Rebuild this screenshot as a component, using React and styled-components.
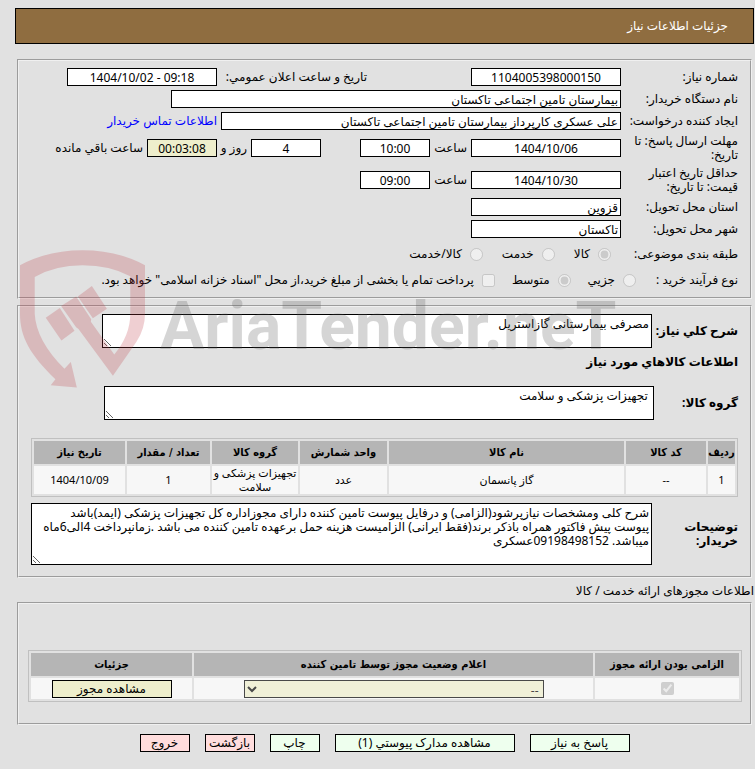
import styled, { createGlobalStyle } from 'styled-components';

const GlobalStyle = createGlobalStyle`
body {
  margin: 8px 1px 8px 15px;
  background-color: #e1e1e1;
  color: #000;
  font-family: 'Noto Sans', 'DejaVu Sans', sans-serif;
  font-size: 12px;
  line-height: 14px;
}

input,
select,
textarea,
button {
  font: inherit;
  color: inherit;
}
`;

const items = [
  {
    id: 1,
    code: '--',
    name: 'گاز پانسمان',
    unit: 'عدد',
    group: 'تجهیزات پزشکی و سلامت',
    amount: '1',
    date: '1404/10/09',
  },
];

const description = 'شرح کلی ومشخصات نیازپرشود(الزامی) و درفایل پیوست تامین کننده دارای مجوزاداره کل تجهیزات پزشکی (ایمد)باشد\nپیوست پیش فاکتور همراه باذکر برند(فقط ایرانی) الزامیست هزینه حمل برعهده تامین کننده می باشد .زمانپرداخت 4الی6ماه\nمیباشد. 09198498152عسکری';

const Watermark = () => (
  <Mark aria-hidden="true">
    <svg width="125" height="138" viewBox="60 180 374 412" fill="#be3c46">
      <path d="M60 225Q145 180 247 180Q350 180 434 225V370Q434 415 408 455L338 556L235 416L228 411L183 347L228 319L273 387L272 394L342 492Q390 434 390 370V258Q330 225 247 225Q165 225 104 260V370Q108 450 193 535L212 515L230 591L152 584L166 566C90 492 60 440 60 370Z" />
      <path d="M137 382L179 353L223 421L184 450Z" />
      <path d="M233 319L275 287L320 355L278 384Z" />
    </svg>
    <WordMark>AriaTender.neT</WordMark>
  </Mark>
);

const App = () => (
  <>
    <GlobalStyle />
    <Page dir="rtl" lang="fa">
      <Header>جزئیات اطلاعات نیاز</Header>

      <Panel>
        <Row>
          <Label htmlFor="number">شماره نیاز:</Label>
          <Field id="number" $w={150} $center readOnly value="1104005398000150" />
          <PublicLabel htmlFor="public">تاریخ و ساعت اعلان عمومي:</PublicLabel>
          <Field id="public" dir="ltr" $w={150} $center readOnly value="1404/10/02 - 09:18" />
        </Row>
        <Row>
          <Label htmlFor="buyer">نام دستگاه خریدار:</Label>
          <Field id="buyer" $w={450} readOnly value="بیمارستان تامین اجتماعی تاکستان" />
        </Row>
        <Row>
          <Label htmlFor="creator">ایجاد کننده درخواست:</Label>
          <Field id="creator" $w={400} readOnly value="علی عسکری کارپرداز بیمارستان تامین اجتماعی تاکستان" />
          <Link href="#contact">اطلاعات تماس خریدار</Link>
        </Row>
        <Row $h={32}>
          <Label htmlFor="deadline">مهلت ارسال پاسخ: تا تاریخ:</Label>
          <Field id="deadline" $w={150} $center readOnly value="1404/10/06" />
          <Caption as="label" htmlFor="deadline-time" $w={33}>ساعت</Caption>
          <Field id="deadline-time" $w={70} $center readOnly value="10:00" />
          <Spacer />
          <Field aria-label="روز" $w={70} $center readOnly value="4" />
          <Caption $w={26}>روز و</Caption>
          <Field aria-label="ساعت باقي مانده" $w={70} $center $highlight readOnly value="00:03:08" />
          <Caption>ساعت باقي مانده</Caption>
        </Row>
        <Row $h={32}>
          <Label htmlFor="credit">حداقل تاریخ اعتبار قیمت: تا تاریخ:</Label>
          <Field id="credit" $w={150} $center readOnly value="1404/10/30" />
          <Caption as="label" htmlFor="credit-time" $w={33}>ساعت</Caption>
          <Field id="credit-time" $w={70} $center readOnly value="09:00" />
        </Row>
        <Row>
          <Label htmlFor="province">استان محل تحویل:</Label>
          <Field id="province" $w={150} readOnly value="قزوین" />
        </Row>
        <Row>
          <Label htmlFor="city">شهر محل تحویل:</Label>
          <Field id="city" $w={150} readOnly value="تاکستان" />
        </Row>
        <Row $h={28}>
          <Label as="span">طبقه بندی موضوعی:</Label>
          <Options $indent={7} $gap={16}>
            <Option>
              <input type="radio" name="subject" disabled defaultChecked />
              کالا
            </Option>
            <Option>
              <input type="radio" name="subject" disabled />
              خدمت
            </Option>
            <Option>
              <input type="radio" name="subject" disabled />
              کالا/خدمت
            </Option>
          </Options>
        </Row>
        <Row $h={24}>
          <Label as="span" $w={99}>نوع فرآیند خرید :</Label>
          <Options $gap={14}>
            <Option>
              <input type="radio" name="process" disabled />
              جزیي
            </Option>
            <Option>
              <input type="radio" name="process" disabled defaultChecked />
              متوسط
            </Option>
            <Option>
              <input type="checkbox" disabled />
              پرداخت تمام یا بخشی از مبلغ خرید،از محل &quot;اسناد خزانه اسلامی&quot; خواهد بود.
            </Option>
          </Options>
        </Row>
      </Panel>

      <NeedPanel>
        <Row $h={38}>
          <Label $bold $w={86} htmlFor="summary">شرح کلي نیاز:</Label>
          <Area id="summary" $w={550} $h={34} readOnly value="مصرفی بیمارستانی گازاستریل" />
        </Row>
        <Title>اطلاعات کالاهاي مورد نیاز</Title>
        <Row $h={38}>
          <Label $bold $w={84} htmlFor="group">گروه کالا:</Label>
          <Area id="group" $w={550} $h={34} readOnly value=" تجهیزات پزشکی و سلامت" />
        </Row>
        <GoodsTable>
          <thead>
            <tr>
              <Th $w={27}>ردیف</Th>
              <Th $w={80}>کد کالا</Th>
              <Th>نام کالا</Th>
              <Th $w={87}>واحد شمارش</Th>
              <Th $w={86}>گروه کالا</Th>
              <Th $w={83}>تعداد / مقدار</Th>
              <Th $w={91}>تاریخ نیاز</Th>
            </tr>
          </thead>
          <tbody>
            {items.map((item) => (
              <tr key={item.id}>
                <Td>{item.id}</Td>
                <Td>{item.code}</Td>
                <Td>{item.name}</Td>
                <Td>{item.unit}</Td>
                <Td>{item.group}</Td>
                <Td>{item.amount}</Td>
                <Td dir="ltr">{item.date}</Td>
              </tr>
            ))}
          </tbody>
        </GoodsTable>
        <Row $h={62}>
          <Label $bold $w={86} htmlFor="description">توضیحات خریدار:</Label>
          <Area id="description" $h={62} readOnly value={description} />
        </Row>
      </NeedPanel>

      <SectionTitle>اطلاعات مجوزهای ارائه خدمت / کالا</SectionTitle>
      <LicensePanel>
        <Table>
          <thead>
            <tr>
              <Th $w={144}>الزامی بودن ارائه مجوز</Th>
              <Th>اعلام وضعیت مجوز توسط تامین کننده</Th>
              <Th $w={161}>جزئیات</Th>
            </tr>
          </thead>
          <tbody>
            <tr>
              <Td><Check type="checkbox" aria-label="الزامی بودن ارائه مجوز" disabled defaultChecked /></Td>
              <Td>
                <Select aria-label="اعلام وضعیت مجوز" disabled>
                  <option>--</option>
                </Select>
              </Td>
              <Td><Button type="button" $w={120} $color="#eeeecc">مشاهده مجوز</Button></Td>
            </tr>
          </tbody>
        </Table>
      </LicensePanel>

      <Actions>
        <Button type="button" $w={100} $color="#eeffee">پاسخ به نیاز</Button>
        <Button type="button" $w={180} $color="#eeffee">مشاهده مدارک پیوستي (1)</Button>
        <Button type="button" $w={50} $color="#eeffee">چاپ</Button>
        <Button type="button" $w={50} $color="#ffdddd">بازگشت</Button>
        <Button type="button" $w={50} $color="#ffdddd">خروج</Button>
      </Actions>

      <Watermark />
    </Page>
  </>
);

export default App;

const Page = styled.main`
position: relative;
`;

const Header = styled.header`
display: flex;
align-items: center;
box-sizing: border-box;
height: 36px;
margin-bottom: 15px;
padding: 0 25px;
border: 1px solid #000;
background-color: #8f6d40;
color: #fff;
`;

const Panel = styled.section`
margin: 0 2px 6px;
padding: 5px 12px;
border: 2px groove #f0f0f0;
`;

const NeedPanel = styled(Panel)`
padding-bottom: 11px;
`;

const LicensePanel = styled(Panel)`
padding: 46px 8px 21px 9px;
`;

const Row = styled.div`
display: flex;
align-items: center;
min-height: ${({ $h }) => $h || 22}px;
`;

const Label = styled.label`
flex: none;
box-sizing: border-box;
width: ${({ $w }) => $w || 117}px;
font-weight: ${({ $bold }) => ($bold ? 'bold' : 'normal')};
`;

const PublicLabel = styled.label`
width: 150px;
margin-right: 104px;
white-space: nowrap;
`;

const Caption = styled.span`
width: ${({ $w }) => ($w ? `${$w}px` : 'auto')};
margin: 0 4px;
white-space: nowrap;
`;

const Spacer = styled.span`
width: 39px;
`;

const Field = styled.input`
box-sizing: border-box;
width: ${({ $w }) => $w}px;
height: 18px;
padding: 0 2px;
border: 1px solid #000;
border-radius: 0;
background-color: ${({ $highlight }) => ($highlight ? '#eeeecc' : '#fff')};
text-align: ${({ $center }) => ($center ? 'center' : 'start')};
`;

const Link = styled.a`
margin-right: 4px;
color: #00f;
text-decoration: none;
`;

const Options = styled.div`
display: flex;
gap: ${({ $gap }) => $gap}px;
margin-right: ${({ $indent }) => $indent || 0}px;
`;

const Option = styled.label`
display: flex;
align-items: center;
gap: 5px;
white-space: nowrap;

input {
  margin: 3px;
}
`;

const Area = styled.textarea`
box-sizing: border-box;
width: ${({ $w }) => ($w ? `${$w}px` : '100%')};
height: ${({ $h }) => $h}px;
padding: 2px;
border: 1px solid #000;
background-color: #fff;
`;

const Title = styled.h2`
margin: 5px 0 15px;
font-size: 12px;
line-height: 14px;
`;

const Table = styled.table`
width: 100%;
border: 1px solid #c0c0c0;
border-spacing: 2px;
`;

const GoodsTable = styled(Table)`
margin: 16px 0 6px;
`;

const Th = styled.th`
box-sizing: border-box;
width: ${({ $w }) => ($w ? `${$w}px` : 'auto')};
height: 23px;
padding: 0;
background-color: #b5b5b5;
font-family: 'DejaVu Sans Condensed', 'DejaVu Sans', sans-serif;
font-size: 11px;
`;

const Td = styled.td`
padding: 0;
background-color: #f7f7f7;
font-size: 11px;
text-align: center;
`;

const SectionTitle = styled.h3`
margin: 0 0 4px;
font-size: 12px;
font-weight: normal;
`;

const Check = styled.input`
display: block;
margin: 4px auto;
`;

const Select = styled.select`
width: 300px;
height: 18px;
border: 1px solid #000;
border-radius: 0;
background-color: #eeeecc;
font-size: 12px;
line-height: 14px;
opacity: 0.7;
`;

const Button = styled.button`
width: ${({ $w }) => $w}px;
height: 18px;
padding: 0;
border: 1px solid #000;
background-color: ${({ $color }) => $color};
font-size: 12px;
line-height: 14px;
white-space: nowrap;
`;

const Actions = styled.div`
display: flex;
justify-content: center;
gap: 15px;
margin-top: 9px;
`;

const Mark = styled.div`
position: absolute;
top: 242px;
left: 5px;
display: flex;
align-items: flex-start;
direction: ltr;
gap: 15px;
opacity: 0.24;
pointer-events: none;
`;

const WordMark = styled.span`
margin-top: 44px;
color: #555;
font-family: Roboto, 'Liberation Sans', sans-serif;
font-size: 66px;
font-weight: bold;
line-height: 66px;
`;
